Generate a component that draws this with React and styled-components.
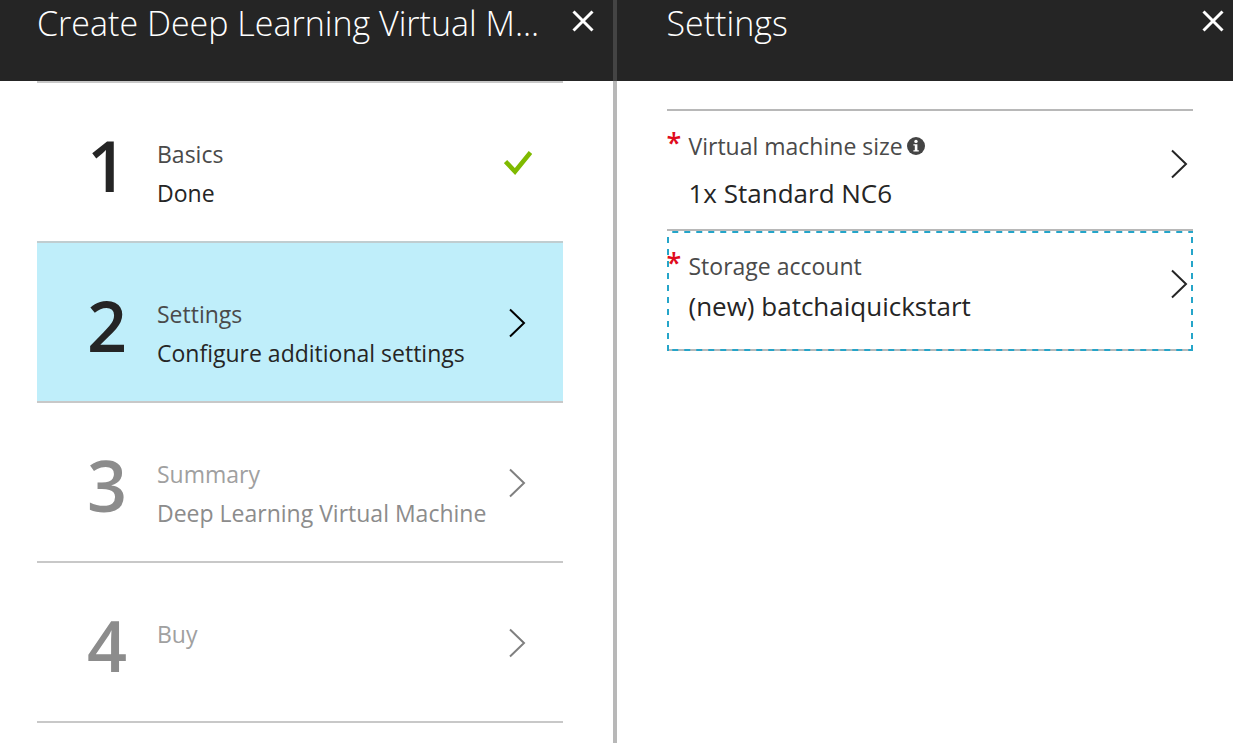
import React from "react";
import styled, { createGlobalStyle } from "styled-components";

const GlobalStyle = createGlobalStyle`
  * { box-sizing: border-box; }
  body {
    margin: 0;
    background: #fff;
    color: #252525;
    font-family: "Open Sans", "Noto Sans", sans-serif;
  }
  button { font: inherit; color: inherit; background: none; border: 0; padding: 0; margin: 0; text-align: left; cursor: pointer; }
  h1, ol, ul, p { margin: 0; padding: 0; list-style: none; }
  svg { display: block; flex: none; }
`;

const Portal = styled.main`
  display: grid;
  grid-template-columns: repeat(2, minmax(0, 1fr));
  min-height: 100vh;
`;

const Blade = styled.section`
  display: flex;
  flex-direction: column;
  min-width: 0;
`;

const Header = styled.header`
  display: flex;
  align-items: flex-start;
  justify-content: space-between;
  height: 81px;
  padding: 0 ${(p) => (p.$divided ? 19 : 9)}px 0 ${(p) => (p.$divided ? 37 : 50)}px;
  border-right: ${(p) => (p.$divided ? "4px solid #444" : "0")};
  background: #252525;
  color: #fff;
`;

const Title = styled.h1`
  font-size: 34px;
  line-height: 46px;
  font-weight: 300;
  white-space: nowrap;
`;

const CloseButton = styled.button`
  padding-top: 10px;
`;

const Body = styled.div`
  flex: 1;
  padding: ${(p) => (p.$divided ? "0 50px 0 37px" : "28px 40px 0 50px")};
  border-right: ${(p) => (p.$divided ? "4px solid #b8b8b8" : "0")};
`;

const StepList = styled.ol`
  border-bottom: 2px solid #c8c8c8;
`;

const StepButton = styled.button`
  display: flex;
  align-items: center;
  width: 100%;
  height: 160px;
  padding: 2px 29px 0 50px;
  border-top: 2px solid ${(p) => (p.$active ? "#c0cdd0" : "#c8c8c8")};
  background: ${(p) => (p.$active ? "#bfeefa" : "transparent")};
  color: ${(p) => (p.disabled ? "#8c8c8c" : "#252525")};
`;

const StepNumber = styled.span`
  width: 70px;
  padding-top: 4px;
  font-size: 70px;
  line-height: 80px;
  font-weight: 600;
`;

const StepText = styled.span`
  display: flex;
  flex: 1;
  flex-direction: column;
  height: 100px;
  padding-top: 22px;
  font-size: 23px;
  line-height: 39px;
  white-space: nowrap;
`;

const StepTitle = styled.span`
  color: ${(p) => (p.$muted ? "#a0a0a0" : "#4a4a4a")};
`;

const StatusSlot = styled.span`
  display: flex;
  flex: none;
  justify-content: center;
  width: 32px;
`;

const FieldList = styled.ul`
  border-bottom: 2px solid #b8b8b8;
`;

const FieldButton = styled.button`
  position: relative;
  display: flex;
  width: 100%;
  height: 120px;
  padding: 15px 5px 0 0;
  border-top: 2px solid #b8b8b8;
`;

const FocusRing = styled.span`
  --h: linear-gradient(90deg, #25a5c9 50%, transparent 50%);
  --v: linear-gradient(180deg, #25a5c9 50%, transparent 50%);
  position: absolute;
  inset: 0 0 -2px;
  background:
    var(--h) top / 12px 2px repeat-x,
    var(--h) bottom / 12px 2px repeat-x,
    var(--v) left / 2px 12px repeat-y,
    var(--v) right / 2px 12px repeat-y;
  pointer-events: none;
`;

const Required = styled.span`
  width: 22px;
  color: #e00b1c;
  font-size: 27px;
  line-height: 34px;
  font-weight: 600;
`;

const FieldText = styled.span`
  display: flex;
  flex: 1;
  flex-direction: column;
  gap: ${(p) => (p.$loose ? 7 : 0)}px;
`;

const FieldLabel = styled.span`
  display: flex;
  align-items: center;
  gap: 4px;
  color: #4a4a4a;
  font-size: 23px;
  line-height: 40px;
`;

const FieldValue = styled.span`
  font-size: 26px;
  line-height: 40px;
`;

const FieldArrow = styled.span`
  padding-top: 23px;
`;

const CloseIcon = () => (
  <svg width="22" height="22" viewBox="0 0 22 22" aria-hidden="true">
    <path d="M1.5 1.5 20.5 20.5M20.5 1.5 1.5 20.5" stroke="#fff" strokeWidth="3" fill="none" />
  </svg>
);

const Chevron = ({ color }) => (
  <svg width="17" height="30" viewBox="0 0 17 30" aria-hidden="true">
    <path d="M1 1.5 15 15 1 28.5" stroke={color} strokeWidth="2" fill="none" />
  </svg>
);

const Check = () => (
  <svg width="28" height="24" viewBox="0 0 28 24" aria-hidden="true">
    <path d="M1.5 10.5 11 20.5 26.5 1.5" stroke="#7fba00" strokeWidth="4.6" fill="none" />
  </svg>
);

const Info = () => (
  <svg width="18" height="18" viewBox="0 0 18 18" aria-hidden="true">
    <circle cx="9" cy="9" r="9" fill="#444" />
    <circle cx="9" cy="4.4" r="1.7" fill="#fff" />
    <path d="M6.4 7.2H10.4V13.2H11.8V14.6H6.4V13.2H7.8V8.6H6.4Z" fill="#fff" />
  </svg>
);

const steps = [
  { title: "Basics", detail: "Done", done: true },
  { title: "Settings", detail: "Configure additional settings", active: true },
  { title: "Summary", detail: "Deep Learning Virtual Machine", disabled: true },
  { title: "Buy", detail: "", disabled: true },
];

const fields = [
  { label: "Virtual machine size", value: "1x Standard NC6", info: true },
  { label: "Storage account", value: "(new) batchaiquickstart", focused: true },
];

export default function App() {
  return (
    <>
      <GlobalStyle />
      <Portal>
        <Blade>
          <Header $divided>
            <Title>Create Deep Learning Virtual M...</Title>
            <CloseButton type="button" aria-label="Close"><CloseIcon /></CloseButton>
          </Header>
          <Body $divided>
            <StepList>
              {steps.map((s, i) => (
                <li key={s.title}>
                  <StepButton type="button" $active={s.active} disabled={s.disabled}>
                    <StepNumber>{i + 1}</StepNumber>
                    <StepText>
                      <StepTitle $muted={s.disabled}>{s.title}</StepTitle>
                      <span>{s.detail}</span>
                    </StepText>
                    <StatusSlot>
                      {s.done ? <Check /> : <Chevron color={s.disabled ? "#808080" : "#000"} />}
                    </StatusSlot>
                  </StepButton>
                </li>
              ))}
            </StepList>
          </Body>
        </Blade>
        <Blade>
          <Header>
            <Title>Settings</Title>
            <CloseButton type="button" aria-label="Close"><CloseIcon /></CloseButton>
          </Header>
          <Body>
            <FieldList>
              {fields.map((f) => (
                <li key={f.label}>
                  <FieldButton type="button">
                    {f.focused && <FocusRing />}
                    <Required>*</Required>
                    <FieldText $loose={f.info}>
                      <FieldLabel>{f.label}{f.info && <Info />}</FieldLabel>
                      <FieldValue>{f.value}</FieldValue>
                    </FieldText>
                    <FieldArrow><Chevron color="#252525" /></FieldArrow>
                  </FieldButton>
                </li>
              ))}
            </FieldList>
          </Body>
        </Blade>
      </Portal>
    </>
  );
}
